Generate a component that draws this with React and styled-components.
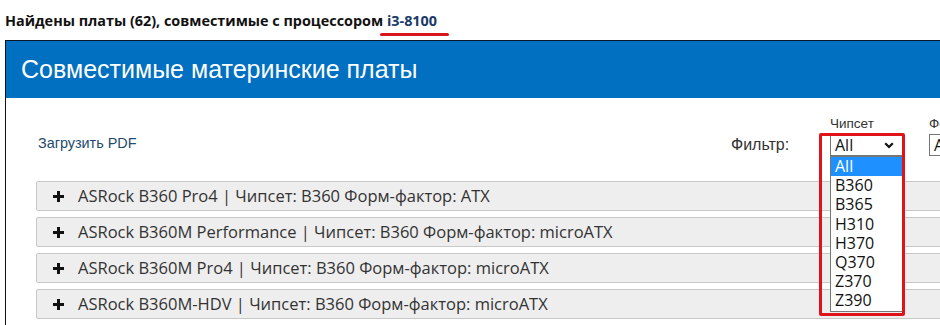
import React from 'react';
import styled, { createGlobalStyle } from 'styled-components';

const GlobalStyle = createGlobalStyle`
    html, body {
        margin: 0;
        padding: 0;
        background: #fff;
        overflow: hidden;
    }
    body {
        font-family: "Liberation Sans", Arial, sans-serif;
    }
`;

const boards = [
    { name: 'ASRock B360 Pro4', chipset: 'B360', form: 'ATX' },
    { name: 'ASRock B360M Performance', chipset: 'B360', form: 'microATX' },
    { name: 'ASRock B360M Pro4', chipset: 'B360', form: 'microATX' },
    { name: 'ASRock B360M-HDV', chipset: 'B360', form: 'microATX' },
    { name: 'ASRock B365 Pro4', chipset: 'B365', form: 'ATX' },
];

const chipsets = ['All', 'B360', 'B365', 'H310', 'H370', 'Q370', 'Z370', 'Z390'];

const Page = styled.div`
    width: 1200px;
    padding: 12px 0 0 5px;
`;

const Heading = styled.h1`
    margin: 0 0 10px;
    font: 700 14.4px/18px "Open Sans", sans-serif;
    color: #111;
`;

// hand-drawn red underline under the CPU name
const Cpu = styled.span`
    position: relative;
    color: #1b3a6a;

    &::after {
        content: '';
        position: absolute;
        left: -7px;
        right: -12px;
        bottom: -6px;
        height: 3px;
        border-radius: 2px;
        background: #d8141c;
    }
`;

const Panel = styled.section`
    border-left: 1px solid #111;
    border-top: 1px solid #0c1828;
    height: 400px;
`;

const PanelHeader = styled.div`
    height: 57px;
    display: flex;
    align-items: center;
    padding-left: 15px;
    background: #0170c1;
    color: #fff;
    font: 25px "Liberation Sans", Arial, sans-serif;
`;

const PanelBody = styled.div`
    padding-left: 30px;
`;

const Toolbar = styled.div`
    display: flex;
    align-items: flex-end;
    padding-top: 18px;
    margin-bottom: 25px;
`;

const PdfLink = styled.a`
    flex: 0 0 695px;
    box-sizing: border-box;
    padding-left: 2px;
    margin-bottom: 4px;
    font: 14.4px/17px "Liberation Sans", Arial, sans-serif;
    color: #214a6e;
    text-decoration: none;
`;

const FilterLabel = styled.span`
    flex: 0 0 99px;
    margin-bottom: 2px;
    font: 16px/18px "Liberation Sans", Arial, sans-serif;
    color: #333;
`;

const FilterGroup = styled.div`
    display: flex;
    flex-direction: column;
    gap: 3px;
    width: ${p => p.width}px;
    margin-right: 26px;
`;

const GroupLabel = styled.span`
    font: 13.5px/15px "Liberation Sans", Arial, sans-serif;
    color: #333;
    white-space: nowrap;
`;

const Combo = styled.div`
    position: relative;
`;

const SelectBox = styled.div`
    display: flex;
    align-items: center;
    justify-content: space-between;
    height: 22px;
    box-sizing: border-box;
    padding: 0 8px 0 4px;
    border: 1px solid #767676;
    background: #fff;
    font: 16px/20px "Open Sans", sans-serif;
    color: #111;
`;

const OptionList = styled.ul`
    position: absolute;
    top: 100%;
    left: 0;
    right: 0;
    z-index: 2;
    margin: 0;
    padding: 0;
    list-style: none;
    background: #fff;
    border: 1px solid #767676;
`;

const Option = styled.li`
    height: 19.2px;
    padding-left: 4px;
    font: 16px/19px "Open Sans", sans-serif;
    color: ${p => (p.active ? '#fff' : '#111')};
    background: ${p => (p.active ? '#1e90ff' : 'transparent')};
`;

// red annotation frame drawn over the open select
const Highlight = styled.div`
    position: absolute;
    top: -1px;
    left: -11px;
    width: 86px;
    height: 183px;
    box-sizing: border-box;
    border: 3px solid #e0121a;
    border-radius: 2px;
    z-index: 3;
    pointer-events: none;
`;

const Rows = styled.div`
    display: flex;
    flex-direction: column;
    gap: 6px;
`;

const Row = styled.div`
    display: flex;
    align-items: center;
    gap: 14px;
    height: 30px;
    box-sizing: border-box;
    padding-left: 16px;
    background: #eee;
    border: 1px solid #c8c8c8;
    border-radius: 2px;
    font: 16.5px/20px "Open Sans", sans-serif;
    color: #333;
    white-space: nowrap;
`;

const Chevron = () => (
    <svg width="10" height="7" viewBox="0 0 10 7">
        <polyline points="1.2,1.2 5,5 8.8,1.2" fill="none" stroke="#111" strokeWidth="2.2" />
    </svg>
);

const Plus = () => (
    <svg width="11" height="11" viewBox="0 0 11 11">
        <path d="M4 0h3v4h4v3H7v4H4V7H0V4h4z" fill="#111" />
    </svg>
);

const App = () => (
    <>
        <GlobalStyle />
        <Page>
            <Heading>
                Найдены платы (62), совместимые с процессором <Cpu>i3-8100</Cpu>
            </Heading>

            <Panel>
                <PanelHeader>Совместимые материнские платы</PanelHeader>
                <PanelBody>
                    <Toolbar>
                        <PdfLink href="#">Загрузить PDF</PdfLink>
                        <FilterLabel>Фильтр:</FilterLabel>

                        <FilterGroup width={73}>
                            <GroupLabel>Чипсет</GroupLabel>
                            <Combo>
                                <SelectBox>
                                    All <Chevron />
                                </SelectBox>
                                <OptionList>
                                    {chipsets.map((c, i) => (
                                        <Option key={c} active={i === 0}>
                                            {c}
                                        </Option>
                                    ))}
                                </OptionList>
                                <Highlight />
                            </Combo>
                        </FilterGroup>

                        <FilterGroup width={110}>
                            <GroupLabel>Форм-фактор</GroupLabel>
                            <SelectBox>
                                All <Chevron />
                            </SelectBox>
                        </FilterGroup>
                    </Toolbar>

                    <Rows>
                        {boards.map(b => (
                            <Row key={b.name}>
                                <Plus />
                                {b.name} | Чипсет: {b.chipset} Форм-фактор: {b.form}
                            </Row>
                        ))}
                    </Rows>
                </PanelBody>
            </Panel>
        </Page>
    </>
);

export default App;
